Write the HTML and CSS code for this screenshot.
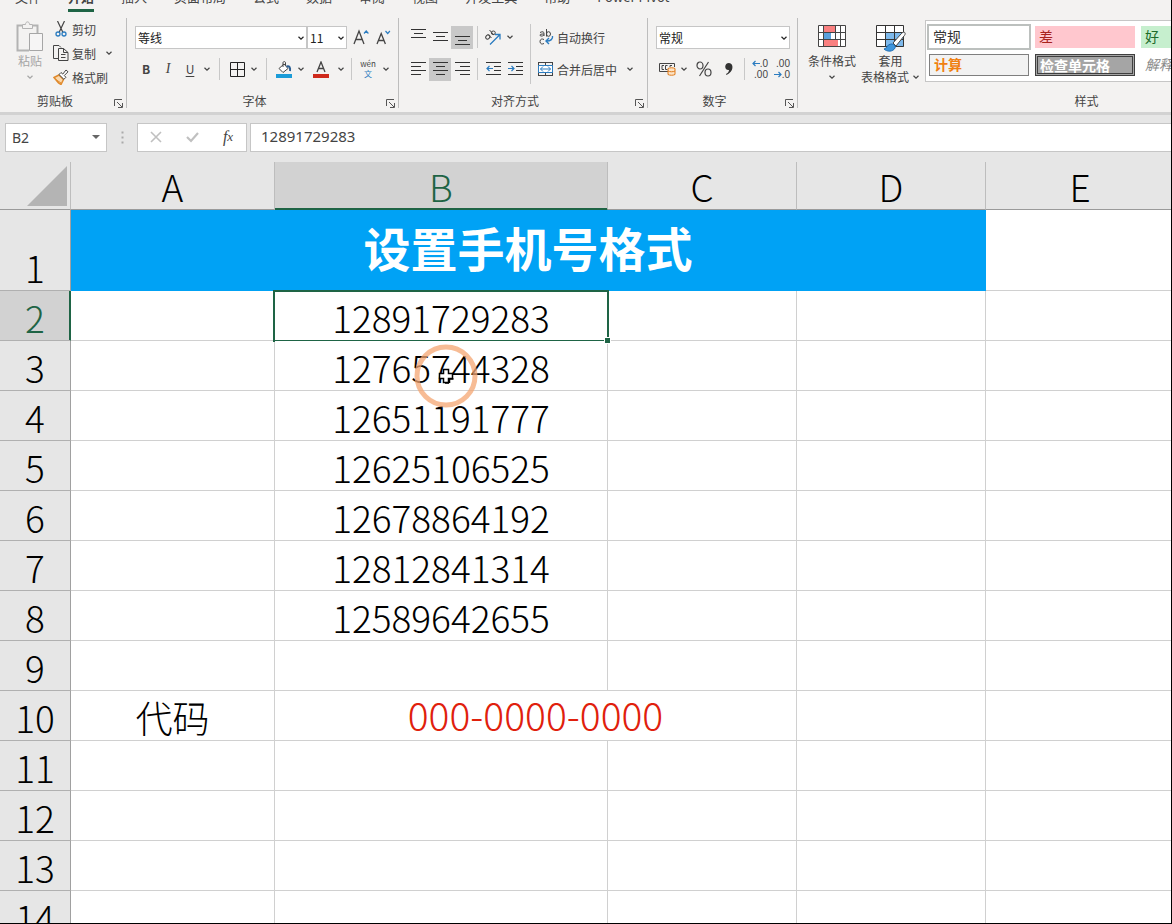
FILE: index.html
```html
<!DOCTYPE html>
<html lang="zh-CN">
<head>
  <meta charset="UTF-8">
  <title>设置手机号格式</title>
  <link rel="stylesheet" href="styles.css">
</head>
<body>

  <!-- 公用图标 -->
  <svg class="defs" width="0" height="0" aria-hidden="true">
    <symbol id="chevron" viewBox="0 0 8 8"><path d="M1.5 2.8 4 5.2 6.5 2.8" fill="none" stroke="currentColor" stroke-width="1.2"/></symbol>
    <symbol id="launcher" viewBox="0 0 9 9"><path d="M.5 7V.5H8M3 3l5 5M8.500 4v4.500H4" fill="none" stroke="#555"/></symbol>
  </svg>

  <header class="ribbon">
    <nav class="tabs">
      <button class="tab">文件</button>
      <button class="tab active">开始</button>
      <button class="tab">插入</button>
      <button class="tab">页面布局</button>
      <button class="tab">公式</button>
      <button class="tab">数据</button>
      <button class="tab">审阅</button>
      <button class="tab">视图</button>
      <button class="tab">开发工具</button>
      <button class="tab">帮助</button>
      <button class="tab">Power Pivot</button>
    </nav>

    <div class="groups">
      <section class="group clipboard">
        <div class="group-body">
          <button class="big-btn paste" disabled>
            <svg width="28" height="32" viewBox="0 0 28 32" fill="none" stroke="#b3b3b3"><path d="M6 4.500H1.500v25H13M17 4.500h4.500V12" stroke-width="2"/><path d="M6.500 7.500v-4h3C9.500 0 13.500 0 13.500 3.500h3v4z" fill="#f3f2f1"/><path d="M13.500 12.500h13v17h-13z" fill="#f6f5f5" stroke="#a6a6a6"/></svg>
            <span>粘贴</span>
            <svg class="chev"><use href="#chevron"/></svg>
          </button>
          <div class="stack">
            <button class="row-btn">
              <svg width="16" height="16" viewBox="0 0 16 16" fill="none"><path d="m4.500 0 5.200 11M11.500 0 6.300 11" stroke="#444" stroke-width="1.200"/><circle cx="5" cy="13" r="2" stroke="#2b7cc0" stroke-width="1.300"/><circle cx="11" cy="13" r="2" stroke="#2b7cc0" stroke-width="1.300"/></svg>
              剪切
            </button>
            <button class="row-btn">
              <svg width="16" height="16" viewBox="0 0 16 16" fill="none" stroke="#444"><path d="M5.500 13.500h-5V.5H6l2 2"/><path d="M5.500 3.500h5l4.500 4v8H5.500zM10.500 3.500v4H15M8 9.500h4.500M8 12.500h4.500"/></svg>
              复制
              <svg class="chev wide"><use href="#chevron"/></svg>
            </button>
            <button class="row-btn">
              <svg width="16" height="16" viewBox="0 0 16 16" fill="none"><path d="M1 8.500 6 6l4.500 4.500L8 15.500 5.500 14z" fill="#fbd9ae" stroke="#e08a2c" stroke-width="1.500"/><path d="m2 10 6 4" stroke="#e08a2c"/><path d="m6 5.500 2-2 1.800 1.600L13 1l2 1.800-3.700 3.700 1.600 1.800-2 2z" fill="#fff" stroke="#444"/></svg>
              格式刷
            </button>
          </div>
        </div>
        <div class="group-foot">剪贴板<svg class="launcher"><use href="#launcher"/></svg></div>
      </section>

      <section class="group font">
        <div class="group-body rows">
          <div class="row">
            <label class="combo combo-font"><select aria-label="字体"><option>等线</option></select><svg class="chev"><use href="#chevron"/></svg></label>
            <label class="combo combo-size"><select aria-label="字号"><option>11</option></select><svg class="chev"><use href="#chevron"/></svg></label>
            <button class="tool" aria-label="增大字号"><svg width="17" height="16" viewBox="0 0 17 16" fill="none"><path d="M1 15 6 2l5 13M2.700 10.500h6.600" stroke="#444" stroke-width="1.300"/><path d="m11 4.500 2.200-2.500 2.200 2.500" stroke="#2b7cc0" stroke-width="1.200"/></svg></button>
            <button class="tool" aria-label="减小字号"><svg width="15" height="16" viewBox="0 0 15 16" fill="none"><path d="m1 15 4.200-10.500L9.400 15M2.500 11.500h5.400" stroke="#444" stroke-width="1.300"/><path d="m9.500 2 2.200 2.500L13.900 2" stroke="#2b7cc0" stroke-width="1.200"/></svg></button>
          </div>
          <div class="row">
            <button class="tool bold">B</button>
            <button class="tool italic">I</button>
            <button class="tool underline">U</button>
            <button class="drop" aria-label="下划线选项"><svg class="chev"><use href="#chevron"/></svg></button>
            <i class="sep wide"></i>
            <button class="tool" aria-label="边框"><svg width="15" height="15" viewBox="0 0 15 15" fill="none" stroke="#222"><path d="M.5.5h14v14H.5zM7.500.5v14M.5 7.500h14"/></svg></button>
            <button class="drop" aria-label="边框选项"><svg class="chev"><use href="#chevron"/></svg></button>
            <i class="sep wide"></i>
            <button class="tool" aria-label="填充颜色"><svg width="16" height="17" viewBox="0 0 16 17" fill="none"><path d="M3 7.500 8 3l4 4.500-5 4z" fill="#fff" stroke="#444"/><path d="M7 6V2c0-2 2.500-2 2.500 0v2.500" stroke="#444"/><path d="M10.500 5.500c3-1 4 1 3.500 4.500" stroke="#2b5f94" stroke-width="2"/><path d="M0 13h16v4H0z" fill="#1b9cd8"/></svg></button>
            <button class="drop" aria-label="填充选项"><svg class="chev"><use href="#chevron"/></svg></button>
            <button class="tool percent" aria-label="字体颜色"><svg width="16" height="17" viewBox="0 0 16 17" fill="none"><path d="M4 11 8 1l4 10M5.300 7.500h5.400" stroke="#444" stroke-width="1.300"/><path d="M0 13h16v4H0z" fill="#cf2a1c"/></svg></button>
            <button class="drop" aria-label="颜色选项"><svg class="chev"><use href="#chevron"/></svg></button>
            <i class="sep"></i>
            <button class="tool wide phonetic"><span>wén</span><b>文</b></button>
            <button class="drop" aria-label="拼音选项"><svg class="chev"><use href="#chevron"/></svg></button>
          </div>
        </div>
        <div class="group-foot">字体<svg class="launcher"><use href="#launcher"/></svg></div>
      </section>

      <section class="group align">
        <div class="group-body">
          <div class="rows">
            <div class="row">
              <button class="tool" aria-label="顶端对齐"><svg width="15" height="17" viewBox="0 0 15 17" stroke="#333"><path d="M0 .5h15M3 4.500h9M0 8.500h15"/></svg></button>
              <button class="tool" aria-label="垂直居中"><svg width="15" height="17" viewBox="0 0 15 17" stroke="#333"><path d="M0 3.500h15M3 7.500h9M0 11.500h15"/></svg></button>
              <button class="tool on" aria-label="底端对齐"><svg width="15" height="17" viewBox="0 0 15 17" stroke="#333"><path d="M0 7.500h15M3 11.500h9M0 15.500h15"/></svg></button>
              <i class="sep"></i>
              <button class="tool" aria-label="方向"><svg width="18" height="17" viewBox="0 0 18 17" fill="none"><g stroke="#444"><ellipse cx="3.800" cy="8" rx="2.300" ry="1.800" transform="rotate(-45 3.800 8)"/><path d="m4 5.500 3.500 3.500M5.500 1l4.500 5"/><ellipse cx="9.300" cy="3.800" rx="2" ry="1.800"/></g><path d="m6 15.500 9.500-9.500M11 5.500h5v5" stroke="#2b7cc0" stroke-width="1.300"/></svg></button>
              <button class="drop" aria-label="方向选项"><svg class="chev"><use href="#chevron"/></svg></button>
            </div>
            <div class="row">
              <button class="tool" aria-label="左对齐"><svg width="15" height="14" viewBox="0 0 15 14" stroke="#333"><path d="M0 .5h15M0 4.500h10M0 8.500h15M0 12.500h10"/></svg></button>
              <button class="tool on" aria-label="居中"><svg width="15" height="14" viewBox="0 0 15 14" stroke="#333"><path d="M0 .5h15M3 4.500h9M0 8.500h15M3 12.500h9"/></svg></button>
              <button class="tool" aria-label="右对齐"><svg width="15" height="14" viewBox="0 0 15 14" stroke="#333"><path d="M0 .5h15M5 4.500h10M0 8.500h15M5 12.500h10"/></svg></button>
              <i class="sep"></i>
              <button class="tool" aria-label="减少缩进"><svg width="15" height="14" viewBox="0 0 15 14" fill="none"><path d="M0 .5h15M8 4.500h7M8 8.500h7M0 12.500h15" stroke="#333"/><path d="M7 6.500H1M3.500 4 1 6.500 3.500 9" stroke="#2b7cc0" stroke-width="1.200"/></svg></button>
              <button class="tool" aria-label="增加缩进"><svg width="15" height="14" viewBox="0 0 15 14" fill="none"><path d="M0 .5h15M8 4.500h7M8 8.500h7M0 12.500h15" stroke="#333"/><path d="M0 6.500h6M3.500 4 6 6.500 3.500 9" stroke="#2b7cc0" stroke-width="1.200"/></svg></button>
            </div>
          </div>
          <i class="sep tall"></i>
          <div class="rows">
            <button class="row row-text">
              <svg width="22" height="16" viewBox="0 0 22 16" fill="none"><g stroke="#444"><path d="M5 3.500c3-1.500 4-.5 4 1V7M9 5C6 5 5 5.300 5 6.200 5 7.500 8 7.300 9 6M11.500 0v7.500"/><ellipse cx="13.500" cy="5" rx="2" ry="2.300"/><path d="M9 10.500c-2-1-4-.5-4 2s2 3 4 2"/></g><path d="M17.500 7c.5 3-1.500 5-6 5M14 9l-3 3 3 3" stroke="#2b7cc0" stroke-width="1.400"/></svg>
              自动换行
            </button>
            <button class="row row-text">
              <svg width="22" height="16" viewBox="0 0 22 16" fill="none"><path d="M3.500 1v14M17.500 1v14M3 1.500h15M3 14.500h15M10.500 1v3M10.500 12v3" stroke="#444"/><path d="M3.500 4.500h14v7h-14z" fill="#fff" stroke="#2b7cc0"/><path d="M5.500 8h10M8 5.500 5.500 8 8 10.500M13 5.500 15.500 8 13 10.500" stroke="#2b7cc0"/></svg>
              合并后居中
              <svg class="chev wide"><use href="#chevron"/></svg>
            </button>
          </div>
        </div>
        <div class="group-foot">对齐方式<svg class="launcher"><use href="#launcher"/></svg></div>
      </section>

      <section class="group number">
        <div class="group-body rows">
          <div class="row">
            <label class="combo combo-number"><select aria-label="数字格式"><option>常规</option></select><svg class="chev"><use href="#chevron"/></svg></label>
          </div>
          <div class="row">
            <button class="tool" aria-label="会计数字格式"><svg width="17" height="16" viewBox="0 0 17 16" fill="none"><path d="M9 10.500H.5v-8h15V6M5 4.500H3v4h2M8.500 8.500h-2v-4h2M13 4.500h-2V6" stroke="#444"/><path d="M9 7.500c2-1 5-1 7 0v6c-2 1-5 1-7 0z" fill="#fce3c5" stroke="#e07b1a"/><path d="M9 10c2 1 5 1 7 0" stroke="#e07b1a"/></svg></button>
            <button class="drop" aria-label="会计选项"><svg class="chev"><use href="#chevron"/></svg></button>
            <button class="tool percent" aria-label="百分比"><svg width="16" height="16" viewBox="0 0 16 16" fill="none" stroke="#444" stroke-width="1.200"><ellipse cx="4" cy="4.500" rx="3" ry="3.500"/><ellipse cx="12" cy="11.500" rx="3" ry="3.500"/><path d="M12.500 1 3.500 15"/></svg></button>
            <button class="tool" aria-label="千位分隔"><svg width="10" height="14" viewBox="0 0 10 14"><path d="M5 1c5 0 5 9-2.500 12l-.5-1c2-1 3-2.500 3-4C0 8.500 0 1 5 1z" fill="#333"/></svg></button>
            <i class="sep"></i>
            <button class="tool decimals"><span><svg width="8" height="7" viewBox="0 0 8 7" fill="none" stroke="#2b7cc0" stroke-width="1.200"><path d="M8 3.500H1M3.500 1 1 3.500 3.500 6"/></svg>.0</span><span>.00</span></button>
            <button class="tool decimals"><span>.00</span><span><svg width="8" height="7" viewBox="0 0 8 7" fill="none" stroke="#2b7cc0" stroke-width="1.200"><path d="M0 3.500h7M4.500 1 7 3.500 4.500 6"/></svg>.0</span></button>
          </div>
        </div>
        <div class="group-foot">数字<svg class="launcher"><use href="#launcher"/></svg></div>
      </section>

      <section class="group styles">
        <div class="group-body">
          <button class="big-btn">
            <svg width="28" height="32" viewBox="0 0 28 32"><path d="M.5 4.500h27v21H.5z" fill="#fff"/><path d="M5 4h13v7H5zM5 19h15v7H5z" fill="#f98080"/><path d="M5 11h8v8H5z" fill="#5aa0dc"/><path d="M.5 4.500h27v21H.5zM.5 11.500h27M.5 18.500h27M5.500 4v22M17.500 4v15M22.500 4v22" fill="none" stroke="#444"/></svg>
            <span>条件格式</span>
            <svg class="chev"><use href="#chevron"/></svg>
          </button>
          <button class="big-btn">
            <svg width="30" height="32" viewBox="0 0 30 32"><path d="M.5 4.500h27v21H.5z" fill="#fff"/><path d="M10 11h18v15H10z" fill="#7db9ec"/><path d="M.5 4.500h27v21H.5zM.5 11.500h27M.5 18.500h27M9.500 4v22M18.500 4v22" fill="none" stroke="#333"/><path d="M28 11c2 1 1 3 0 4l-8 10-3-3 8-9c1-1 2-2 3-2z" fill="#fff" stroke="#444"/><path d="M8 28c3 0 3-5 7-5 3 0 5 2 4 4-2 4-8 4-11 1z" fill="#3f95db" stroke="#1f6fb5"/></svg>
            <span>套用</span>
            <span class="with-chev">表格格式<svg class="chev"><use href="#chevron"/></svg></span>
          </button>
          <div class="gallery">
            <button class="style normal">常规</button>
            <button class="style bad">差</button>
            <button class="style good">好</button>
            <button class="style calc">计算</button>
            <button class="style check">检查单元格</button>
            <button class="style explain">解释性文本</button>
          </div>
        </div>
        <div class="group-foot">样式</div>
      </section>
    </div>
  </header>

  <div class="formula-bar">
    <label class="name-box"><input type="text" value="B2" aria-label="名称框"><svg width="8" height="4" viewBox="0 0 8 4"><path d="M0 0h8L4 4z" fill="#666"/></svg></label>
    <svg class="grip" width="3" height="13" viewBox="0 0 3 13"><path d="M.5.5h2v2h-2zM.5 5.500h2v2h-2zM.5 10.500h2v2h-2z" fill="#aaa"/></svg>
    <div class="formula-tools">
      <button aria-label="取消"><svg width="12" height="12" viewBox="0 0 12 12"><path d="m1 1 10 10M11 1 1 11" stroke="#c0c0c0" stroke-width="1.600"/></svg></button>
      <button aria-label="输入"><svg width="13" height="12" viewBox="0 0 13 12"><path d="m1 6 4 4 7-8" fill="none" stroke="#c0c0c0" stroke-width="2.200"/></svg></button>
      <button class="fx">f<small>x</small></button>
    </div>
    <input class="formula" type="text" value="12891729283" aria-label="编辑栏">
  </div>

  <main class="sheet">
    <table>
      <colgroup>
        <col class="col-head"><col class="col-a"><col class="col-b"><col class="col-c"><col class="col-c"><col class="col-c">
      </colgroup>
      <thead>
        <tr>
          <th class="corner"><svg width="40" height="40" viewBox="0 0 40 40"><path d="M40 0v40H0z" fill="#b4b4b4"/></svg></th>
          <th>A</th><th class="current">B</th><th>C</th><th>D</th><th>E</th>
        </tr>
      </thead>
      <tbody>
        <tr class="title-row"><th>1</th><td class="title" colspan="4">设置手机号格式</td><td></td></tr>
        <tr><th class="current">2</th><td></td><td class="selected">12891729283<i class="handle"></i></td><td></td><td></td><td></td></tr>
        <tr>
          <th>3</th><td></td>
          <td class="hovered">12765744328
            <svg class="pointer" width="64" height="64" viewBox="0 0 64 64"><circle cx="32" cy="32" r="29" fill="none" stroke="#f4a672" stroke-opacity=".75" stroke-width="5"/><path d="M29.500 25.500h5v4h4v5h-4v4h-5v-4h-4v-5h4z" fill="#fff" stroke="#000" stroke-width="1.500"/><path d="M35 39h-4M39.500 35h-4v4" fill="none" stroke="#000" stroke-width="1.500"/></svg>
          </td>
          <td></td><td></td><td></td>
        </tr>
        <tr><th>4</th><td></td><td>12651191777</td><td></td><td></td><td></td></tr>
        <tr><th>5</th><td></td><td>12625106525</td><td></td><td></td><td></td></tr>
        <tr><th>6</th><td></td><td>12678864192</td><td></td><td></td><td></td></tr>
        <tr><th>7</th><td></td><td>12812841314</td><td></td><td></td><td></td></tr>
        <tr><th>8</th><td></td><td>12589642655</td><td></td><td></td><td></td></tr>
        <tr><th>9</th><td></td><td></td><td></td><td></td><td></td></tr>
        <tr><th>10</th><td>代码</td><td class="code" colspan="2">000-0000-0000</td><td></td><td></td></tr>
        <tr><th>11</th><td></td><td></td><td></td><td></td><td></td></tr>
        <tr><th>12</th><td></td><td></td><td></td><td></td><td></td></tr>
        <tr><th>13</th><td></td><td></td><td></td><td></td><td></td></tr>
        <tr><th>14</th><td></td><td></td><td></td><td></td><td></td></tr>
      </tbody>
    </table>
  </main>

</body>
</html>
```
FILE: styles.css
```css
:root {
  --ribbon-bg: #f3f2f1;
  --chrome-bg: #e6e6e6;
  --line: #c6c6c6;
  --grid: #d0d0d0;
  --green: #1e6445;
  --text: #444;
}

* {
  box-sizing: border-box;
}

body {
  margin: 0;
  height: 100vh;
  display: flex;
  flex-direction: column;
  overflow: hidden;
  border-right: 1px solid #000;
  border-bottom: 1px solid #000;
  background: var(--chrome-bg);
  color: var(--text);
  font-family: "Noto Sans CJK SC", sans-serif;
  font-size: 12px;
}

button, input, select {
  font: inherit;
  color: inherit;
  margin: 0;
  padding: 0;
  border: none;
  background: none;
  white-space: nowrap;
}

svg {
  flex: none;
  display: block;
}

.defs {
  position: absolute;
}

/* 功能区 */
.ribbon {
  flex: none;
  overflow: hidden;
  background: var(--ribbon-bg);
  border-bottom: 3px solid #d2d2d2;
  padding-bottom: 4px;
}

.tabs {
  display: flex;
  align-items: flex-end;
  gap: 27px;
  height: 14px;
  padding-left: 15px;
  overflow: hidden;
}

.tab {
  flex: none;
  font-size: 13px;
  line-height: 20px;
  padding-bottom: 2px;
  margin-bottom: 2px;
  border-bottom: 3px solid transparent;
}

.tab.active {
  font-weight: bold;
  border-bottom-color: var(--green);
}

.groups {
  display: flex;
  padding-top: 4px;
}

.group {
  flex: none;
  display: flex;
  flex-direction: column;
  height: 90px;
  border-right: 1px solid #bdbdbd;
}

.clipboard { width: 127px; }
.font { width: 272px; }
.align { width: 249px; }
.number { width: 150px; }
.styles { width: 578px; }

.group-body {
  display: flex;
  height: 76px;
  padding: 0 8px;
}

.group-foot {
  position: relative;
  height: 14px;
  line-height: 14px;
  padding-right: 16px;
  text-align: center;
}

.styles .group-foot {
  padding-right: 0;
}

.launcher {
  position: absolute;
  right: 3px;
  bottom: 0;
  width: 9px;
  height: 9px;
}

.chev {
  width: 8px;
  height: 8px;
}

.rows, .stack {
  display: flex;
  flex-direction: column;
}

.rows {
  padding-top: 3px;
}

.row {
  display: flex;
  align-items: center;
  height: 32px;
}

.clipboard .group-body {
  padding-left: 15px;
}

.big-btn {
  display: flex;
  flex-direction: column;
  align-items: center;
  line-height: 16px;
  padding-top: 3px;
}

.big-btn .chev {
  margin-top: 4px;
}

.paste {
  width: 30px;
  margin-right: 8px;
  color: #a6a6a6;
}

.row-btn {
  display: flex;
  align-items: center;
  gap: 3px;
  height: 24px;
  padding-bottom: 2px;
}

.row-btn .wide {
  margin-left: 6px;
}

.combo {
  position: relative;
  display: flex;
  flex: none;
}

.combo select {
  appearance: none;
  width: 100%;
  height: 23px;
  padding: 0 2px;
  border: 1px solid var(--line);
  background: #fff;
  color: #222;
}

.combo .chev {
  position: absolute;
  right: 2px;
  top: 8px;
  color: #222;
}

.combo-font { width: 172px; }
.combo-size { width: 40px; }
.combo-number { width: 134px; }

.tool {
  display: flex;
  align-items: center;
  justify-content: center;
  flex: none;
  width: 22px;
  height: 23px;
}

.tool.wide { width: 24px; }
.tool.percent { width: 28px; }

.tool.on {
  background: #c8c8c8;
}

.combo-size + .tool {
  margin-left: 3px;
}

.drop {
  display: flex;
  align-items: center;
  justify-content: center;
  flex: none;
  width: 12px;
  height: 23px;
}

.bold { font-weight: bold; padding-bottom: 2px; }
.italic { font-family: "Liberation Serif", serif; font-size: 14px; font-style: italic; }
.underline { text-decoration: underline; text-underline-offset: 2px; padding-bottom: 2px; }

.sep {
  flex: none;
  width: 1px;
  height: 22px;
  margin: 0 4px;
  background: #c8c8c8;
}

.sep.wide {
  margin: 0 6px;
}

.sep.tall {
  height: 60px;
  margin-top: 6px;
}

.phonetic {
  flex-direction: column;
  font-size: 8px;
  line-height: 10px;
}

.phonetic b {
  color: #2b7cc0;
  font-weight: normal;
}

.row-text .wide {
  margin-left: 9px;
}

.decimals {
  flex-direction: column;
  align-items: flex-end;
  padding-right: 3px;
  font-family: "Liberation Sans", sans-serif;
  font-size: 10px;
  line-height: 11px;
}

.decimals span {
  display: flex;
  align-items: center;
}

.styles .group-body {
  padding: 0 0 0 10px;
}

.with-chev {
  display: flex;
  gap: 3px;
}

.styles .big-btn + .big-btn {
  margin-left: 5px;
}

.gallery {
  display: grid;
  grid-template-columns: repeat(4, 100px);
  grid-auto-rows: 22px;
  gap: 6px;
  flex: 1;
  height: 62px;
  margin: 2px 0 0 5px;
  padding: 5px 3px;
  border: 1px solid var(--line);
  background: #fff;
}

.style {
  padding: 0 4px 2px;
  text-align: left;
  font-size: 14px;
  line-height: 16px;
}

.normal { color: #333; outline: 2px solid #bcc0be; }
.bad { background: #ffc7ce; color: #a8231c; }
.good { background: #c6efce; color: #1c6b2a; }
.calc { grid-column: 1; border: 1px solid #7f7f7f; background: #f2f2f2; color: #f08010; font-weight: bold; }
.check { border: 3px double #3f3f3f; background: #a5a5a5; color: #fff; font-weight: bold; padding: 0 2px 2px; }
.explain { color: #8a8a8a; font-style: italic; }

/* 编辑栏 */
.formula-bar {
  flex: none;
  display: flex;
  align-items: center;
  height: 47px;
  padding: 0 0 3px 5px;
}

.name-box, .formula-tools, .formula {
  height: 29px;
  border: 1px solid var(--line);
  background: #fff;
}

.name-box {
  display: flex;
  align-items: center;
  width: 102px;
  padding: 0 6px;
  font-family: "Noto Sans", sans-serif;
  font-size: 14px;
}

.name-box input {
  flex: 1;
  min-width: 0;
}

.grip {
  margin: 0 13px 0 14px;
}

.formula-tools {
  display: flex;
  width: 110px;
}

.formula-tools button {
  display: flex;
  flex: 1;
  align-items: center;
  justify-content: center;
}

.formula-tools .fx {
  font-family: "Liberation Serif", serif;
  font-size: 16px;
  font-style: italic;
}

.fx small {
  font-size: 13px;
}

.formula {
  flex: 1;
  margin-left: 3px;
  padding: 0 10px 2px;
  border-right: none;
  font-family: "Noto Sans", sans-serif;
  font-size: 15px;
}

/* 工作表 */
.sheet {
  flex: 1;
  min-height: 0;
  overflow: hidden;
}

table {
  width: 100%;
  table-layout: fixed;
  border-collapse: separate;
  border-spacing: 0;
  color: #000;
  font-size: 37px;
  font-weight: 300;
  line-height: 45px;
}

.col-head { width: 71px; }
.col-a { width: 204px; }
.col-b { width: 333px; }
.col-c { width: 189px; }

th, td {
  height: 50px;
  padding: 0;
  text-align: center;
  vertical-align: bottom;
  white-space: nowrap;
}

td {
  background: #fff;
  border-right: 1px solid var(--grid);
  border-bottom: 1px solid var(--grid);
}

th {
  font-weight: 300;
  background: var(--chrome-bg);
  border-right: 1px solid #a0a0a0;
  border-bottom: 1px solid #b0b0b0;
}

thead th {
  height: 48px;
  border-right-color: #bdbdbd;
  border-bottom-color: #9a9a9a;
}

th.current {
  background: #d2d2d2;
  color: var(--green);
}

thead th.current {
  box-shadow: inset 0 -1px var(--green);
  border-bottom-color: var(--green);
}

tbody th.current {
  box-shadow: inset -1px 0 var(--green);
  border-right-color: var(--green);
}

.corner svg {
  margin: 0 3px 3px auto;
}

.title-row th, .title-row td {
  height: 81px;
}

.title {
  background: #00a2f5;
  border-color: #00a2f5;
  color: #fff;
  font-size: 47px;
  font-weight: bold;
  vertical-align: top;
  line-height: 74px;
}

.selected, .hovered {
  position: relative;
}

.selected::after {
  content: "";
  position: absolute;
  inset: -1px -2px -2px -2px;
  border: 2px solid var(--green);
}

.handle {
  position: absolute;
  z-index: 1;
  right: -4px;
  bottom: -4px;
  width: 7px;
  height: 7px;
  border: 1px solid #fff;
  background: var(--green);
}

.pointer {
  position: absolute;
  left: 139px;
  top: 3px;
}

.code {
  color: #e0200c;
  font-size: 39px;
  line-height: 47px;
  vertical-align: top;
}
```
